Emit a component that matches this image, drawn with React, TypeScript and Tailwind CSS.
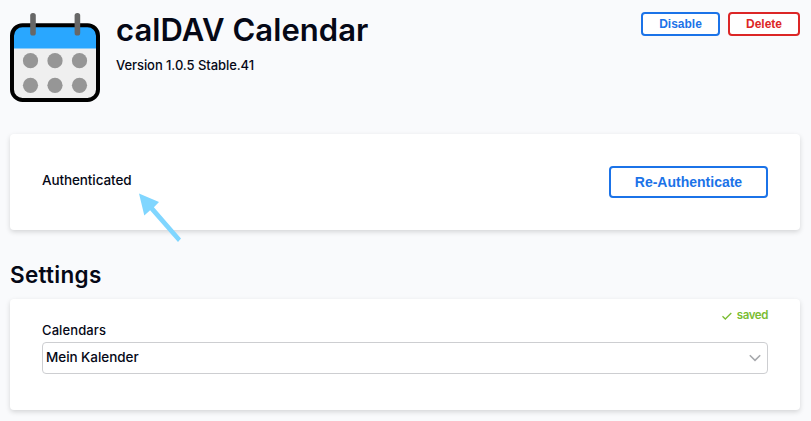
import React from 'react';

function CalendarIcon() {
  return (
    <svg width="92" height="92" viewBox="0 0 92 92" className="block">
      <rect x="2.4" y="13.4" width="85.4" height="74.2" rx="10" fill="#efefef" />
      <path d="M2.4 36.6V23.4a10 10 0 0 1 10-10h65.4a10 10 0 0 1 10 10v13.2z" fill="#29a7ff" />
      <rect x="2" y="13.2" width="86" height="74.8" rx="10.5" fill="none" stroke="#000" strokeWidth="4" />
      <g fill="#676767">
        <rect x="20.2" y="1" width="5.6" height="22.5" rx="2.6" />
        <rect x="64.6" y="1" width="5.6" height="22.5" rx="2.6" />
      </g>
      <g fill="#969696">
        <circle cx="20.5" cy="48.7" r="7.6" />
        <circle cx="45" cy="48.7" r="7.6" />
        <circle cx="69.5" cy="48.7" r="7.6" />
        <circle cx="20.5" cy="73.3" r="7.6" />
        <circle cx="45" cy="73.3" r="7.6" />
        <circle cx="69.5" cy="73.3" r="7.6" />
      </g>
    </svg>
  );
}

function Card({ className, children }: { className: string; children: React.ReactNode }) {
  return (
    <section className={`rounded bg-white px-8 shadow-[0_2px_5px_rgba(0,0,0,0.15)] ${className}`}>
      {children}
    </section>
  );
}

export default function App() {
  return (
    <main className="h-[421px] w-[811px] overflow-hidden bg-[#f9fafc] pr-[11px] pl-[10px] pt-3 font-['Inter','Liberation_Sans',sans-serif] text-[#050816]">
      <header className="flex h-[122px] items-start">
        <CalendarIcon />
        <div className="ml-[14px]">
          <h1 className="h-[38px] text-[31px] leading-[35px] font-semibold whitespace-nowrap tracking-[0.06px]">calDAV Calendar</h1>
          <p className="mt-[5px] text-[13px] leading-5 font-medium tracking-[-0.07px] whitespace-nowrap">Version 1.0.5 Stable.41</p>
        </div>
        <div className="ml-auto flex gap-2 font-['Liberation_Sans',sans-serif] text-xs font-bold">
          <button className="h-6 w-[79px] rounded border-2 border-[#1b73e8] bg-white leading-5 text-[#1b73e8]">Disable</button>
          <button className="h-6 w-[72px] rounded border-2 border-[#dc2626] bg-white leading-5 text-[#dc2626]">Delete</button>
        </div>
      </header>

      <Card className="flex h-24 items-center justify-between">
        <div className="relative -mt-1 text-[13.5px] leading-5 font-medium tracking-[-0.1px]">
          Authenticated
          <svg className="absolute top-[22px] left-[96px]" width="46" height="52" viewBox="0 0 46 52">
            <path d="M1 1.5L21 10L15.9 15.2L43 46.5L40 50L12.1 18.2L6.3 23.5Z" fill="#80d6ff" />
          </svg>
        </div>
        <button className="h-8 w-[159px] rounded border-2 border-[#1b73e8] bg-white font-['Liberation_Sans',sans-serif] text-sm font-bold text-[#1b73e8]">Re-Authenticate</button>
      </Card>

      <h2 className="mt-[30px] h-[39px] text-[22.5px] leading-[29px] font-semibold tracking-[0.3px]">Settings</h2>

      <Card className="h-[111px] pt-2">
        <div className="flex h-4 items-center justify-end text-[11.5px] leading-4 font-semibold text-[#7abd32]">
          <svg className="mr-1 mt-px" width="12" height="10" viewBox="0 0 12 10" fill="none" stroke="currentColor" strokeWidth="1.3">
            <path d="M1.5 5.2L4.3 8L10.3 2" />
          </svg>
          <span className="tracking-[-0.4px]">saved</span>
        </div>
        <label className="mt-[-2px] block text-[13px] leading-[18px] font-medium tracking-[0.1px]">Calendars</label>
        <div className="mt-[3px] flex h-8 items-center justify-between rounded border border-[#cdced1] pr-[6px] pl-[3px] text-[13.5px] font-medium tracking-[-0.05px]">
          <span className="-mt-0.5">Mein Kalender</span>
          <svg width="12" height="8" viewBox="0 0 12 8" fill="none" stroke="#a7a9ad" strokeWidth="1.6">
            <path d="M.8 1.2L6 6.4L11.2 1.2" />
          </svg>
        </div>
      </Card>
    </main>
  );
}
